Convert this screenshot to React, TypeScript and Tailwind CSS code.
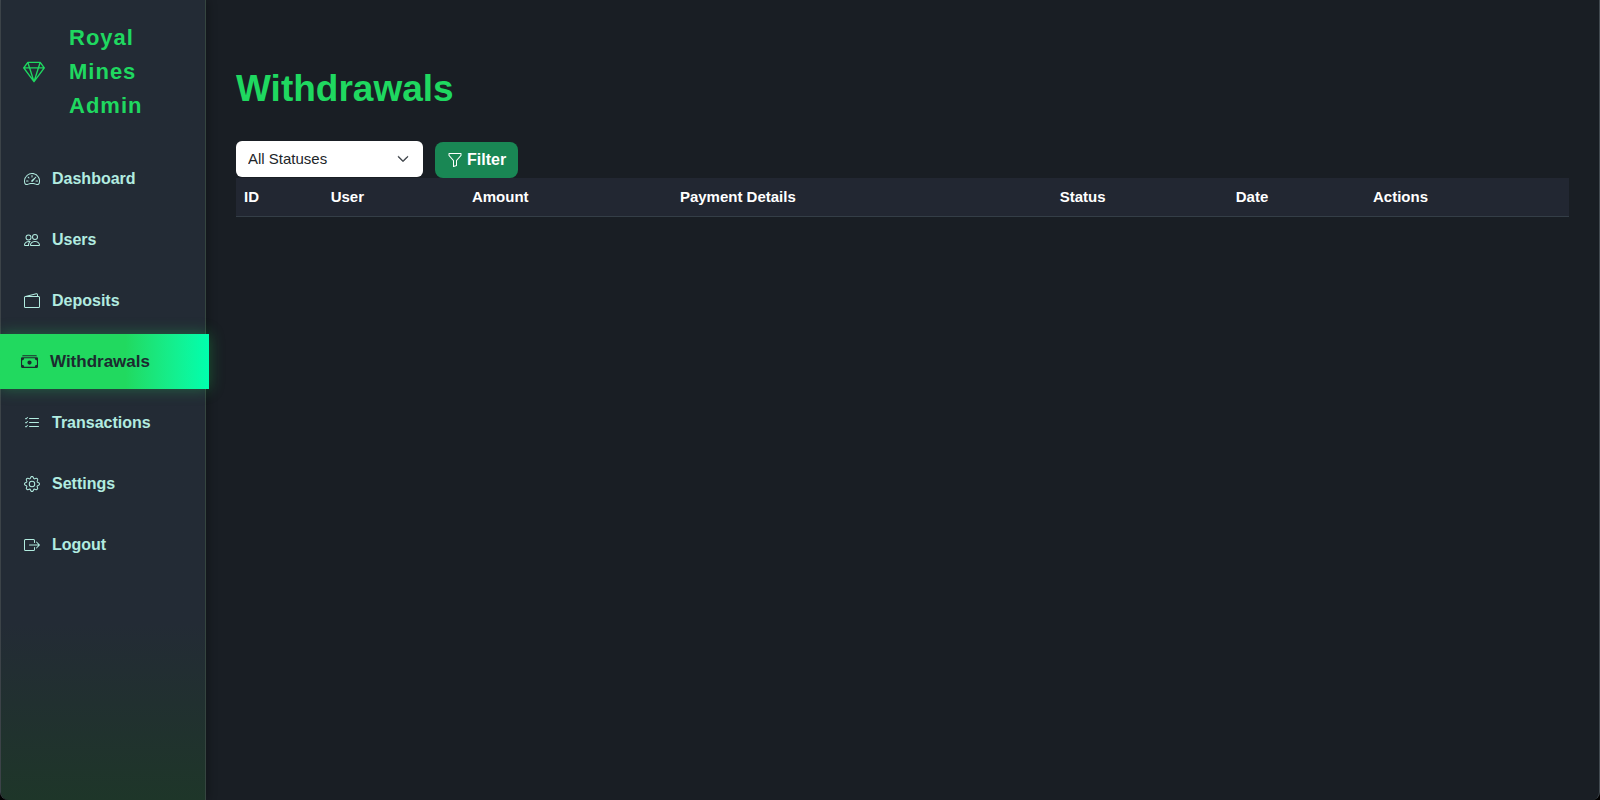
import { useState } from "react";
import { IconType } from "react-icons";
import {
    BsBoxArrowRight,
    BsCashStack,
    BsChevronDown,
    BsFunnel,
    BsGear,
    BsGem,
    BsListCheck,
    BsPeople,
    BsSpeedometer2,
    BsWallet2,
} from "react-icons/bs";

type NavItem = {
    label: string;
    href: string;
    icon: IconType;
};

const navItems: NavItem[] = [
    { label: "Dashboard", href: "#dashboard", icon: BsSpeedometer2 },
    { label: "Users", href: "#users", icon: BsPeople },
    { label: "Deposits", href: "#deposits", icon: BsWallet2 },
    { label: "Withdrawals", href: "#withdrawals", icon: BsCashStack },
    { label: "Transactions", href: "#transactions", icon: BsListCheck },
    { label: "Settings", href: "#settings", icon: BsGear },
    { label: "Logout", href: "#logout", icon: BsBoxArrowRight },
];

const columns = [
    { label: "ID", width: "w-[6.5%]" },
    { label: "User", width: "w-[10.6%]" },
    { label: "Amount", width: "w-[15.6%]" },
    { label: "Payment Details", width: "w-[28.5%]" },
    { label: "Status", width: "w-[13.2%]" },
    { label: "Date", width: "w-[10.3%]" },
    { label: "Actions", width: "w-[15.3%]" },
];

const Sidebar = ({ active }: { active: string }) => {
    return (
        <aside className="relative w-[205px] shrink-0 rounded-bl-lg border-r border-[#35453f] bg-linear-to-b from-[#232b35] from-78% to-[#1e3629] pt-[21px] shadow-[2px_0_10px_rgba(0,0,0,0.3)]">
            <div className="mb-7 flex items-center gap-6 pl-[22px] text-[22px] leading-[34px] font-bold tracking-[1px] text-[#1fd860]">
                <BsGem className="shrink-0" />
                <span className="w-24">Royal Mines Admin</span>
            </div>

            <nav className="flex flex-col gap-2 pt-px">
                {navItems.map(({ label, href, icon: Icon }) => (
                    label === active ? (
                        <a
                            key={label}
                            href={href}
                            aria-current="page"
                            className="-my-px -mr-1 -ml-px flex h-[55px] items-center gap-3 bg-linear-to-r from-[#21d95f] from-60% to-[#00ffae] pl-[21px] text-[17px] font-bold text-[#1c2b2f] shadow-[0_0_14px_rgba(37,216,96,0.35)]"
                        >
                            <Icon />
                            <span>{label}</span>
                        </a>
                    ) : (
                        <a
                            key={label}
                            href={href}
                            className="flex h-[53px] items-center gap-3 pl-[23px] text-base font-bold text-[#b2ece0]"
                        >
                            <Icon />
                            <span>{label}</span>
                        </a>
                    )
                ))}
            </nav>
        </aside>
    );
};

const App = () => {
    const [status, setStatus] = useState("");

    return (
        <div className="bg-black">
            <div className="flex min-h-screen rounded-b-lg border-x border-[#424a50] bg-[#191e24] font-['Liberation_Sans',Arial,sans-serif]">
                <Sidebar active="Withdrawals" />

                <main className="min-w-0 grow px-[30px] pt-[67px]">
                    <h1 className="mb-[30px] text-[37px] leading-[44px] font-bold text-[#1fd860]">Withdrawals</h1>

                    <form className="flex h-[37px] gap-3" onSubmit={e => e.preventDefault()}>
                        <div className="relative self-start">
                            <select
                                aria-label="Status"
                                value={status}
                                onChange={e => setStatus(e.target.value)}
                                className="h-9 w-[187px] appearance-none rounded-md bg-white pr-9 pl-3 text-[15px] text-[#212529]"
                            >
                                <option value="">All Statuses</option>
                                <option value="pending">Pending</option>
                                <option value="approved">Approved</option>
                                <option value="rejected">Rejected</option>
                            </select>
                            <BsChevronDown className="pointer-events-none absolute top-3 right-3.5 size-3 stroke-1 text-[#343a40]" />
                        </div>
                        <button type="submit" className="flex h-9 items-center gap-1 self-end rounded-lg bg-[#198754] px-3 font-bold text-white">
                            <BsFunnel />
                            Filter
                        </button>
                    </form>

                    <table className="w-full table-fixed border-collapse">
                        <thead>
                            <tr className="h-[38px] border-b border-[#343e47] bg-[#222732] text-left text-[15px] text-white">
                                {columns.map(({ label, width }) => (
                                    <th key={label} scope="col" className={`${width} px-2 font-bold`}>{label}</th>
                                ))}
                            </tr>
                        </thead>
                        <tbody />
                    </table>
                </main>
            </div>
        </div>
    );
};

export default App;
